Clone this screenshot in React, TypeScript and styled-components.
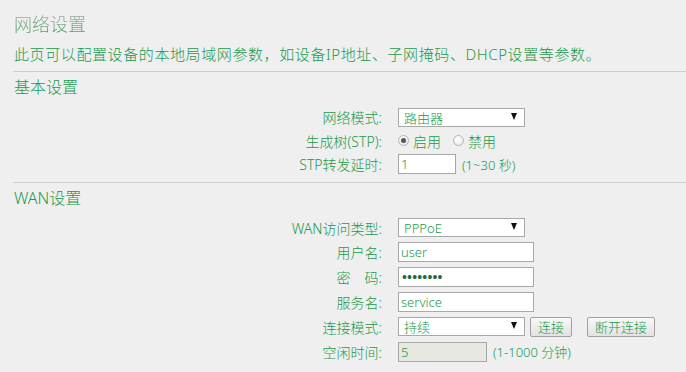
import styled, { createGlobalStyle } from 'styled-components';

const GREEN = '#22994a';

const Global = createGlobalStyle`
	html, body {
		margin: 0;
		padding: 0;
		background: #efefef;
	}
	body {
		font-family: 'Noto Sans', 'Noto Sans CJK SC', sans-serif;
		font-weight: 300;
		color: ${GREEN};
	}
`;

// вся страница
const Page = styled.div`
	width: 686px;
	height: 372px;
	overflow: hidden;
	padding-top: 12px;
	box-sizing: border-box;
`;

const Title = styled.div`
	margin-left: 14px;
	font-size: 18px;
	line-height: 24px;
	width: max-content;
	background: linear-gradient(180deg, #a0a8a2 0%, #7fa88a 45%, #2a9d4f 100%);
	-webkit-background-clip: text;
	background-clip: text;
	color: transparent;
`;

const Desc = styled.div`
	margin: 7px 0 0 14px;
	font-size: 15px;
	line-height: 22px;
	letter-spacing: 0.6px;
	white-space: nowrap;
`;

const Rule = styled.div`
	margin: 6px 0 0 13px;
	height: 1px;
	background: #cfcfcf;
`;

const Section = styled.div`
	margin: 3px 0 0 14px;
	font-size: 16px;
	line-height: 24px;
`;

const Form = styled.div<{ $top: number }>`
	margin-top: ${(p) => p.$top}px;
	display: flex;
	flex-direction: column;
`;

const Row = styled.div<{ $h: number }>`
	display: grid;
	grid-template-columns: 382px 1fr;
	column-gap: 16px;
	align-items: center;
	height: ${(p) => p.$h}px;
`;

const Label = styled.div`
	text-align: right;
	font-size: 14px;
	white-space: pre;
`;

const Controls = styled.div`
	display: flex;
	align-items: center;
	font-size: 13px;
`;

const SelectBox = styled.div<{ $w: number }>`
	position: relative;
	width: ${(p) => p.$w}px;
	height: 19px;
	box-sizing: border-box;
	border: 1px solid #a8a8a8;
	background: #fff;
	padding-left: 5px;
	display: flex;
	align-items: center;
	font-size: 13px;
	color: ${GREEN};
`;

// стрелка поверх селекта
const Arrow = styled.span`
	position: absolute;
	right: 7px;
	top: 4px;
	width: 0;
	height: 0;
	border-left: 3.5px solid transparent;
	border-right: 3.5px solid transparent;
	border-top: 7px solid #111;
`;

const Input = styled.div<{ $w: number; $off?: boolean }>`
	width: ${(p) => p.$w}px;
	height: 20px;
	box-sizing: border-box;
	border: 1px solid #a8a8a8;
	background: ${(p) => (p.$off ? '#e8e8e3' : '#fff')};
	padding-left: 2px;
	display: flex;
	align-items: center;
	font-size: 13px;
	color: ${GREEN};
`;

const Dots = styled.span`
	font-size: 13px;
	font-weight: 700;
	letter-spacing: 0.2px;
	color: #1d6b3a;
	padding-left: 1px;
`;

const Hint = styled.span`
	margin-left: 6px;
	font-size: 13px;
`;

const Radio = styled.span<{ $on?: boolean }>`
	position: relative;
	width: 11px;
	height: 11px;
	box-sizing: border-box;
	border-radius: 50%;
	border: 1px solid #b4b4b4;
	background: radial-gradient(circle at 40% 35%, #fff 0%, #e4e4e4 100%);
	margin-right: 4px;
	&::after {
		content: '';
		display: ${(p) => (p.$on ? 'block' : 'none')};
		position: absolute;
		left: 2px;
		top: 2px;
		width: 5px;
		height: 5px;
		border-radius: 50%;
		background: #555;
	}
`;

const RadioText = styled.span`
	margin-right: 12px;
	font-size: 14px;
`;

const Button = styled.div<{ $gap: number }>`
	margin-left: ${(p) => p.$gap}px;
	height: 20px;
	box-sizing: border-box;
	padding: 0 7px;
	border: 1px solid #a0a0a0;
	border-radius: 2px;
	background: linear-gradient(180deg, #f8f8f8 0%, #e2e2e2 100%);
	display: flex;
	align-items: center;
	font-size: 13px;
	color: ${GREEN};
`;

export default function App() {
	return (
		<Page>
			<Global />
			<Title>网络设置</Title>
			<Desc>此页可以配置设备的本地局域网参数，如设备IP地址、子网掩码、DHCP设置等参数。</Desc>
			<Rule />
			<Section>基本设置</Section>
			<Form $top={6}>
				<Row $h={24}>
					<Label>网络模式:</Label>
					<Controls>
						<SelectBox $w={127}>
							路由器
							<Arrow />
						</SelectBox>
					</Controls>
				</Row>
				<Row $h={23}>
					<Label>生成树(STP):</Label>
					<Controls>
						<Radio $on />
						<RadioText>启用</RadioText>
						<Radio />
						<RadioText>禁用</RadioText>
					</Controls>
				</Row>
				<Row $h={24}>
					<Label>STP转发延时:</Label>
					<Controls>
						<Input $w={58}>1</Input>
						<Hint>(1~30 秒)</Hint>
					</Controls>
				</Row>
			</Form>
			<Rule />
			<Section>WAN设置</Section>
			<Form $top={5}>
				<Row $h={25}>
					<Label>WAN访问类型:</Label>
					<Controls>
						<SelectBox $w={127}>
							PPPoE
							<Arrow />
						</SelectBox>
					</Controls>
				</Row>
				<Row $h={24}>
					<Label>用户名:</Label>
					<Controls>
						<Input $w={136}>user</Input>
					</Controls>
				</Row>
				<Row $h={25}>
					<Label>密　码:</Label>
					<Controls>
						<Input $w={136}>
							<Dots>••••••••</Dots>
						</Input>
					</Controls>
				</Row>
				<Row $h={25}>
					<Label>服务名:</Label>
					<Controls>
						<Input $w={136}>service</Input>
					</Controls>
				</Row>
				<Row $h={25}>
					<Label>连接模式:</Label>
					<Controls>
						<SelectBox $w={127}>
							持续
							<Arrow />
						</SelectBox>
						<Button $gap={5}>连接</Button>
						<Button $gap={15}>断开连接</Button>
					</Controls>
				</Row>
				<Row $h={25}>
					<Label>空闲时间:</Label>
					<Controls>
						<Input $w={89} $off>
							5
						</Input>
						<Hint>(1-1000 分钟)</Hint>
					</Controls>
				</Row>
			</Form>
		</Page>
	);
}
